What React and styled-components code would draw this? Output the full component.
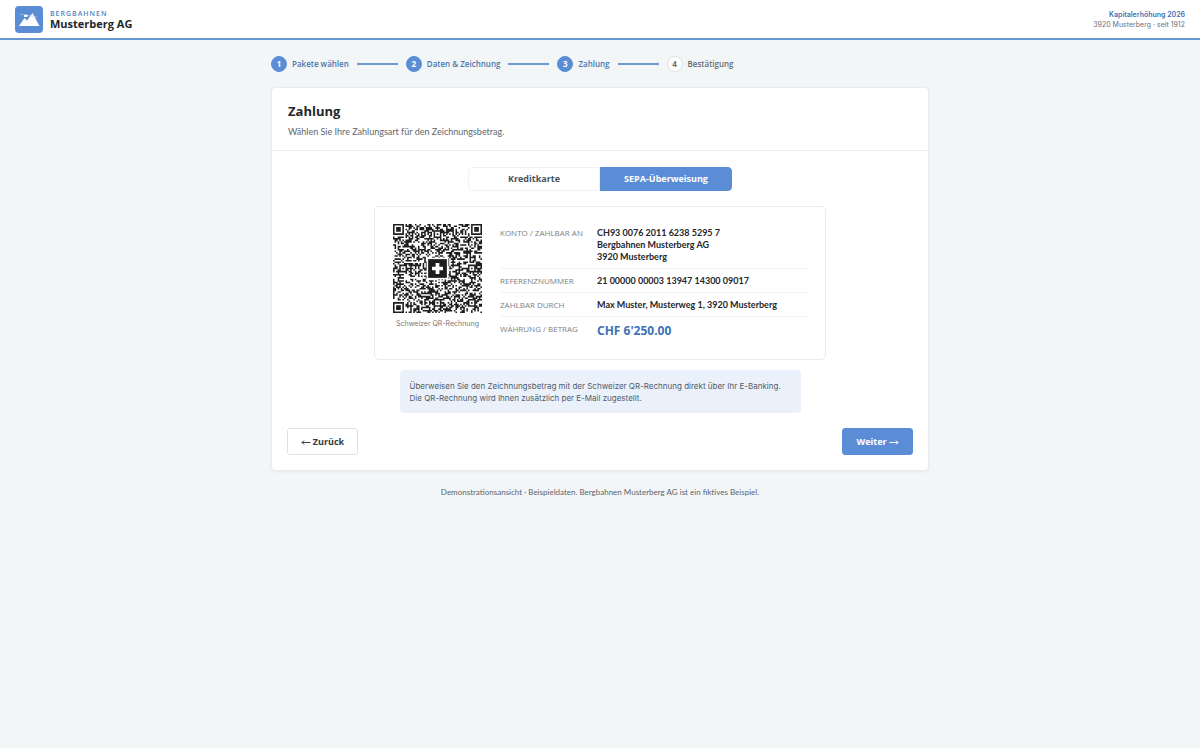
import { useState } from "react"
import styled, { createGlobalStyle, css } from "styled-components"

const azul = "#5b8dd6"
const textFont = `Lato, "Open Sans", sans-serif`
const smallFont = `Inter, "Open Sans", sans-serif`

const GlobalStyle = createGlobalStyle`
  * {
    box-sizing: border-box;
  }
  body {
    margin: 0;
    min-height: 100vh;
    background: #f3f6f7;
    color: #23262b;
    font-family: "Open Sans", "Noto Sans", sans-serif;
    font-size: 9px;
    line-height: 12px;
  }
  button {
    font-family: inherit;
    cursor: pointer;
  }
`

// Header
const Header = styled.header`
  display: flex;
  align-items: center;
  justify-content: space-between;
  padding: 6px 15px 5px;
  background: #ffffff;
  border-bottom: 2px solid #6796d2;
`
const Brand = styled.div`
  display: flex;
  align-items: center;
  gap: 7px;
`
const Logo = styled.svg`
  display: block;
  width: 28px;
  height: 27px;
`
const BrandOver = styled.div`
  color: #5583bf;
  font-size: 7px;
  font-weight: 600;
  line-height: 8px;
  letter-spacing: 1px;
`
const BrandName = styled.div`
  font-size: 11px;
  font-weight: 700;
  line-height: 12px;
`
const HeaderInfo = styled.div`
  color: #6b7076;
  font-family: ${smallFont};
  font-size: 7px;
  line-height: 10px;
  text-align: right;
`
const Campaign = styled.div`
  color: #3f70b3;
  font-weight: 600;
`

// Page column
const Page = styled.main`
  width: 100%;
  max-width: 690px;
  margin: 0 auto;
  padding: 16px;
`
const Steps = styled.ol`
  display: flex;
  align-items: center;
  gap: 8px;
  margin: 0 0 15px;
  padding: 0;
  list-style: none;
`
const Step = styled.li`
  display: flex;
  align-items: center;
  gap: 5px;
  color: ${({ $done }) => ($done ? "#4a76ad" : "#666b71")};
  font-size: 8px;
  font-weight: 600;
  white-space: nowrap;

  &:not(:last-child)::after {
    content: "";
    width: 41px;
    height: 2px;
    margin-left: 3px;
    background: #6f9ad6;
  }
`
const StepNumber = styled.span`
  display: flex;
  align-items: center;
  justify-content: center;
  width: 16px;
  height: 16px;
  border: 1px solid ${({ $done }) => ($done ? azul : "#dcdfe3")};
  border-radius: 50%;
  background: ${({ $done }) => ($done ? azul : "#ffffff")};
  color: ${({ $done }) => ($done ? "#ffffff" : "#666b71")};
  font-size: 8px;
  font-weight: 700;
`

// Card
const Card = styled.section`
  border: 1px solid #e8ecef;
  border-radius: 4px;
  background: #ffffff;
  box-shadow: 0 1px 3px rgba(30, 50, 70, 0.06);
`
const CardHead = styled.div`
  padding: 15px 16px 12px;
  border-bottom: 1px solid #eceef0;
`
const Title = styled.h1`
  margin: 0 0 7px;
  font-size: 13px;
  font-weight: 700;
  line-height: 16px;
`
const Subtitle = styled.p`
  margin: 0;
  color: #62676d;
  font-family: ${textFont};
`
const CardBody = styled.div`
  display: flex;
  flex-direction: column;
  align-items: center;
  padding: 16px 15px 15px;
`
const Tabs = styled.div`
  display: flex;
  width: 100%;
  max-width: 264px;
  margin-bottom: 15px;
`
const Tab = styled.button`
  flex: 1;
  padding: 5px 0;
  border: 1px solid #eff1f3;
  background: #ffffff;
  color: #4b525b;
  font-size: 9px;
  font-weight: 700;
  line-height: 12px;

  &:first-child {
    border-radius: 4px 0 0 4px;
  }
  &:last-child {
    border-radius: 0 4px 4px 0;
  }
  ${({ $active }) =>
    $active &&
    css`
      border-color: ${azul};
      background: ${azul};
      color: #ffffff;
    `}
`

// Swiss QR bill
const Bill = styled.div`
  display: flex;
  align-items: flex-start;
  gap: 18px;
  width: 100%;
  max-width: 452px;
  margin-bottom: 10px;
  padding: 17px 15px 17px 18px;
  border: 1px solid #e8eaed;
  border-radius: 5px;
`
const QrFigure = styled.figure`
  margin: 0;
  text-align: center;
`
const QrSvg = styled.svg`
  display: block;
  width: 89px;
  height: 89px;
`
const QrCaption = styled.figcaption`
  margin-top: 5px;
  color: #74787d;
  font-family: ${smallFont};
  font-size: 7px;
  white-space: nowrap;
`
const Details = styled.dl`
  flex: 1;
  margin: 0;
`
const Row = styled.div`
  display: flex;
  padding: 6px 0 5px;
  border-bottom: 1px solid #f3f4f5;

  &:first-child {
    padding-top: 3px;
  }
  &:last-child {
    padding-bottom: 3px;
    border-bottom: 0;
  }
`
const Label = styled.dt`
  flex: 0 0 97px;
  color: #7b7f85;
  font-size: 8px;
  text-transform: uppercase;
`
const Value = styled.dd`
  margin: 0;
  font-family: ${textFont};
  font-weight: 700;
`
const Amount = styled(Value)`
  color: #3d70b5;
  font-family: inherit;
  font-size: 12px;
  line-height: 16px;
`

const Note = styled.p`
  width: 100%;
  max-width: 401px;
  margin: 0 0 15px;
  padding: 10px 10px 9px;
  border-radius: 4px;
  background: #ebf1fb;
  color: #515b69;
  font-family: ${smallFont};
  font-size: 8px;
`
const Actions = styled.div`
  display: flex;
  justify-content: space-between;
  width: 100%;
`
const Button = styled.button`
  display: flex;
  align-items: center;
  justify-content: center;
  gap: 2px;
  min-width: 71px;
  padding: 6px 12px;
  border: 1px solid ${({ $primary }) => ($primary ? azul : "#dfe2e5")};
  border-radius: 3px;
  background: ${({ $primary }) => ($primary ? azul : "#ffffff")};
  color: ${({ $primary }) => ($primary ? "#ffffff" : "#363b41")};
  font-size: 9px;
  font-weight: 700;
  line-height: 13px;
`
const Arrow = styled.svg`
  width: 10px;
  height: 6px;
  fill: none;
  stroke: currentColor;
`
const Footer = styled.footer`
  margin-top: 15px;
  color: #5f646a;
  font-family: ${textFont};
  font-size: 8px;
  text-align: center;
`

// QR matrix, 57 x 57 modules
const SIZE = 57

const square = (row, col, r0, c0, r) => {
  const d = Math.max(Math.abs(row - r0), Math.abs(col - c0))
  return d <= r ? d : -1
}

const buildQr = () => {
  let seed = 1912
  let path = ""
  for (let row = 0; row < SIZE; row++) {
    for (let col = 0; col < SIZE; col++) {
      seed = (seed * 1103515 + 12345) % 2147483648
      let dark = seed / 2147483648 < 0.5
      if (row === 6 || col === 6) dark = (row + col) % 2 === 0
      for (const [r, c] of [[6, 28], [28, 6], [28, 50], [50, 28], [50, 50]]) {
        const d = square(row, col, r, c, 2)
        if (d >= 0) dark = d !== 1
      }
      for (const [r, c] of [[3, 3], [3, 53], [53, 3]]) {
        const d = square(row, col, r, c, 4)
        if (d >= 0) dark = d !== 2 && d !== 4
      }
      if (dark) path += `M${col} ${row}h1v1h-1z`
    }
  }
  return path
}

const qrPath = buildQr()

const steps = ["Pakete wählen", "Daten & Zeichnung", "Zahlung", "Bestätigung"]
const current = 3

export default function App() {
  const [method, setMethod] = useState("sepa")

  return (
    <>
      <GlobalStyle />
      <Header>
        <Brand>
          <Logo viewBox="0 0 28 27" aria-hidden="true">
            <rect width="28" height="27" rx="4" fill={azul} />
            <path d="M4 20L9.500 12L12 14.500L17.500 7L24.500 20Z" fill="#fff" />
            <path d="M5 8L22 11" stroke="#c5d7f1" strokeWidth="0.6" />
            <rect x="9" y="8.800" width="3.500" height="2.300" rx="0.600" fill="#fff" />
          </Logo>
          <div>
            <BrandOver>BERGBAHNEN</BrandOver>
            <BrandName>Musterberg AG</BrandName>
          </div>
        </Brand>
        <HeaderInfo>
          <Campaign>Kapitalerhöhung 2026</Campaign>
          <div>3920 Musterberg · seit 1912</div>
        </HeaderInfo>
      </Header>

      <Page>
        <Steps>
          {steps.map((name, i) => (
            <Step key={name} $done={i < current}>
              <StepNumber $done={i < current}>{i + 1}</StepNumber>
              {name}
            </Step>
          ))}
        </Steps>

        <Card>
          <CardHead>
            <Title>Zahlung</Title>
            <Subtitle>Wählen Sie Ihre Zahlungsart für den Zeichnungsbetrag.</Subtitle>
          </CardHead>
          <CardBody>
            <Tabs>
              <Tab type="button" $active={method === "card"} onClick={() => setMethod("card")}>
                Kreditkarte
              </Tab>
              <Tab type="button" $active={method === "sepa"} onClick={() => setMethod("sepa")}>
                SEPA-Überweisung
              </Tab>
            </Tabs>

            <Bill>
              <QrFigure>
                <QrSvg viewBox="0 0 57 57" role="img" aria-label="Schweizer QR-Rechnung">
                  <path d={qrPath} fill="#1c1f1e" />
                  <rect x="21.500" y="21.500" width="14" height="14" fill="#fff" />
                  <rect x="22.500" y="22.500" width="12" height="12" fill="#1c1f1e" />
                  <path d="M27.300 25h2.400v2.300h2.300v2.400h-2.300v2.300h-2.400v-2.300h-2.300v-2.400h2.300z" fill="#fff" />
                </QrSvg>
                <QrCaption>Schweizer QR-Rechnung</QrCaption>
              </QrFigure>
              <Details>
                <Row>
                  <Label>Konto / Zahlbar an</Label>
                  <Value>
                    CH93 0076 2011 6238 5295 7
                    <br />
                    Bergbahnen Musterberg AG
                    <br />
                    3920 Musterberg
                  </Value>
                </Row>
                <Row>
                  <Label>Referenznummer</Label>
                  <Value>21 00000 00003 13947 14300 09017</Value>
                </Row>
                <Row>
                  <Label>Zahlbar durch</Label>
                  <Value>Max Muster, Musterweg 1, 3920 Musterberg</Value>
                </Row>
                <Row>
                  <Label>Währung / Betrag</Label>
                  <Amount>CHF 6'250.00</Amount>
                </Row>
              </Details>
            </Bill>

            <Note>
              Überweisen Sie den Zeichnungsbetrag mit der Schweizer QR-Rechnung direkt über Ihr E-Banking.
              <br />
              Die QR-Rechnung wird Ihnen zusätzlich per E-Mail zugestellt.
            </Note>

            <Actions>
              <Button type="button">
                <Arrow viewBox="0 0 10 6" aria-hidden="true">
                  <path d="M9.500 3.500H1M3 1.500L1 3.500L3 5.500" />
                </Arrow>
                Zurück
              </Button>
              <Button type="button" $primary>
                Weiter
                <Arrow viewBox="0 0 10 6" aria-hidden="true">
                  <path d="M0.500 3.500H9M7 1.500L9 3.500L7 5.500" />
                </Arrow>
              </Button>
            </Actions>
          </CardBody>
        </Card>

        <Footer>
          Demonstrationsansicht · Beispieldaten. Bergbahnen Musterberg AG ist ein fiktives Beispiel.
        </Footer>
      </Page>
    </>
  )
}
